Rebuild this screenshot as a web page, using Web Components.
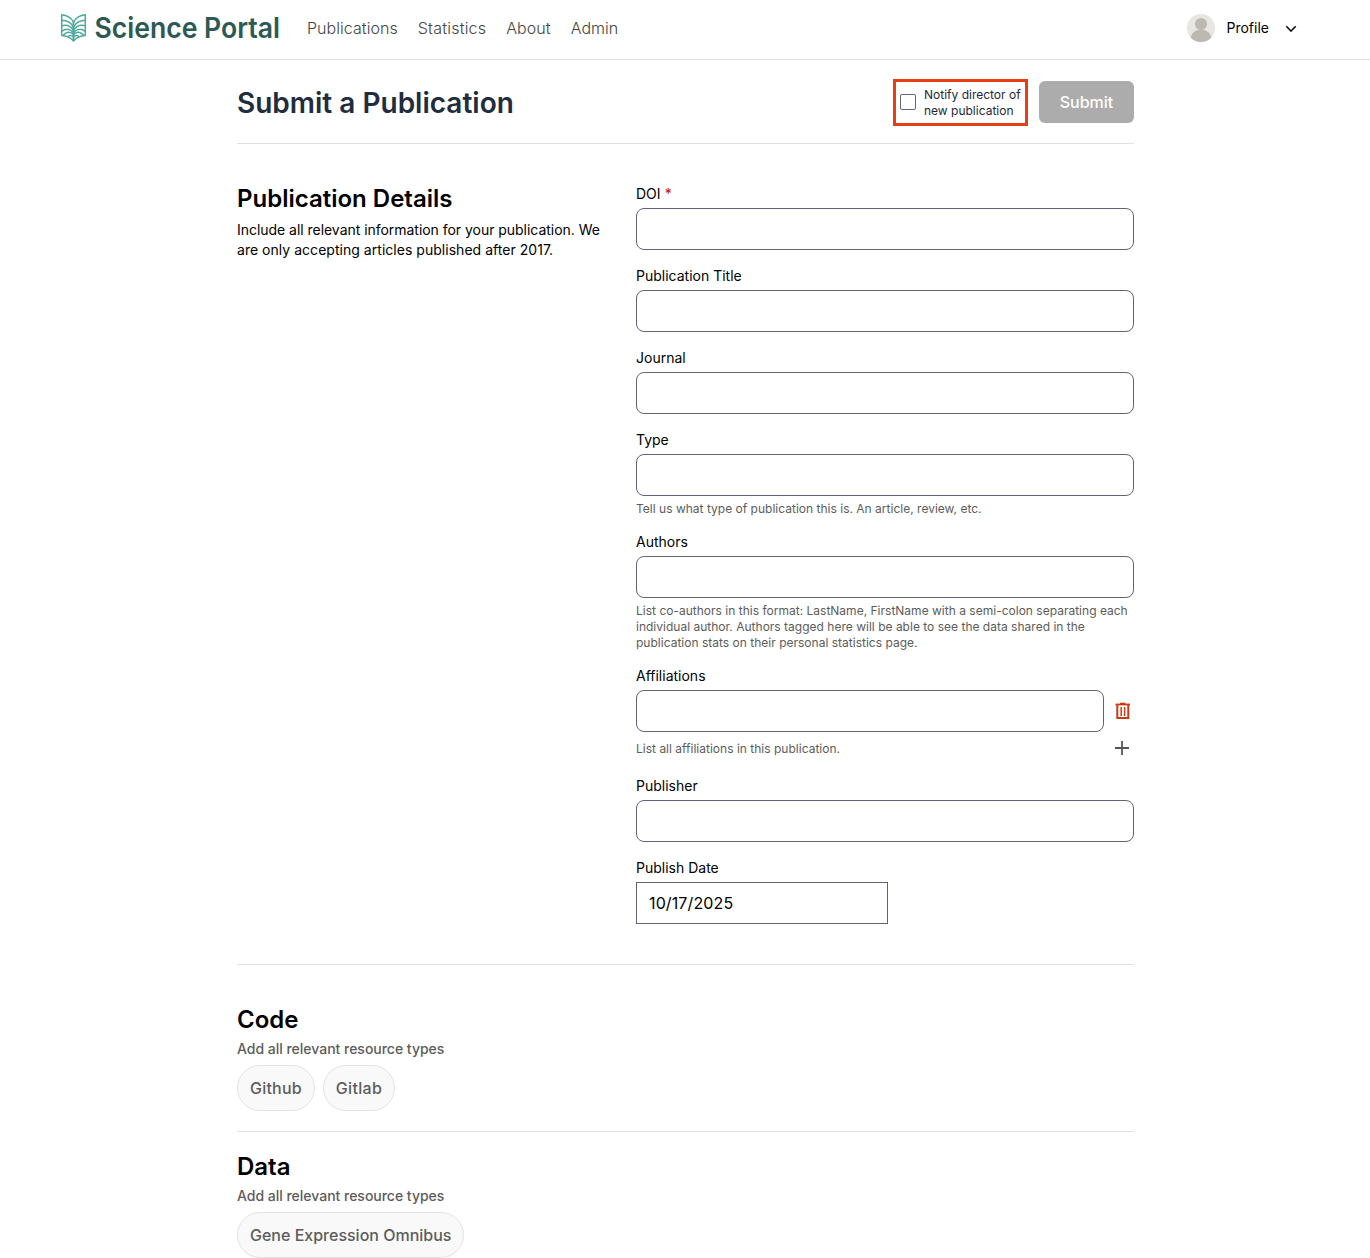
<!DOCTYPE html>
<html lang="en">
<head>
<meta charset="utf-8">
<title>Science Portal</title>
<style>
html{background:#fff}
body{margin:0;font-family:Inter,"Liberation Sans",sans-serif;color:#000;height:1258px;overflow:hidden}
</style>
</head>
<body>
<portal-app></portal-app>
<script>
const define = (name, html, setup) => {
  const tpl = document.createElement('template');
  tpl.innerHTML = '<style>*{box-sizing:border-box}:host{display:block;box-sizing:border-box}</style>' + html;
  customElements.define(name, class extends HTMLElement {
    constructor() {
      super();
      this.attachShadow({mode: 'open'}).append(tpl.content.cloneNode(true));
    }
    connectedCallback() { if (setup) setup(this, this.shadowRoot); }
  });
};

define('portal-logo', `<style>
:host{display:flex;align-items:center;width:246px;height:32px}
svg{display:block;flex:none;overflow:visible}
</style>
<svg width="230" height="36" viewBox="0 0 230 36">
  <g fill="none" stroke="#4ea99b" stroke-width="1.500" stroke-linejoin="round" transform="translate(0 2)">
    <path d="M1.700 2.800C7 3.200 11 5.800 13.500 10C16 5.800 20 3.200 25.300 2.800V23.500C20 23.800 16 26 13.500 29C11 26 7 23.800 1.700 23.500Z"/>
    <path d="M13.500 9.500V29" stroke-width="1.900"/>
    <path d="M1.700 8.300Q9.500 8.300 13.500 15Q17.500 8.300 25.300 8.300M1.700 13.800Q9.500 11.800 13.500 18.500Q17.500 11.800 25.300 13.800M1.700 19.500Q7.500 14.500 13.500 20.500Q19.500 14.500 25.300 19.500M3 23.300Q8.500 17.500 13.500 22.500Q18.500 17.500 24 23.300M7.500 25Q10.500 21.800 13.500 25Q16.500 21.800 19.500 25"/>
  </g>
  <text x="34.500" y="27.600" font-family="Inter,sans-serif" font-weight="620" font-size="28" textLength="185.500" lengthAdjust="spacingAndGlyphs" fill="#2c5954">Science Portal</text>
</svg>`);

define('nav-link', `<style>:host{font-size:16px;line-height:24px;font-weight:300;color:#444;letter-spacing:.05px;white-space:nowrap}:host([wide]){letter-spacing:.23px}</style><slot></slot>`);

define('user-menu', `<style>
:host{display:flex;align-items:center;font-size:14px;line-height:20px}
span{margin:0 14px 0 12px}
svg{display:block}
</style>
<svg width="28" height="28" viewBox="0 0 28 28"><defs><clipPath id="c"><circle cx="14" cy="14" r="14"/></clipPath></defs><g clip-path="url(#c)"><rect width="28" height="28" fill="#e9e6e1"/><circle cx="14" cy="10" r="6" fill="#bcb9b2"/><path d="M3 26C4 19 8.500 15.500 14 15.500S24 19 25 26V28H3Z" fill="#bcb9b2"/></g></svg>
<span><slot></slot></span>
<svg width="16" height="16" viewBox="0 0 16 16" fill="none" stroke="#111" stroke-width="1.600"><path d="M3.300 6.300L8 11L12.700 6.300"/></svg>`);

define('portal-header', `<style>
:host{display:flex;align-items:center;height:60px;padding:0 71px 4px 60px;border-bottom:1px solid #e0e0e0}
nav{display:flex;gap:20px;flex:1;margin-left:1px}
</style>
<portal-logo></portal-logo>
<nav><nav-link>Publications</nav-link><nav-link wide>Statistics</nav-link><nav-link>About</nav-link><nav-link>Admin</nav-link></nav>
<user-menu>Profile</user-menu>`);

define('check-option', `<style>
:host{display:flex;align-items:center;gap:8px;width:135px;height:47px;border:3px solid #e83e14;padding:0 0 0 4px;font-size:12px;line-height:16px;color:#1e293b}
i{width:16px;height:16px;border:1px solid #64657a;border-radius:2px;flex:none;margin-top:-1px}
span{white-space:nowrap;padding-top:2px}
</style><i></i><span><slot></slot></span>`);

define('submit-button', `<style>
button{display:block;border:0;margin:0;padding:0;width:95px;height:42px;border-radius:6px;background:#acacac;color:#fff;font:500 16px/24px Inter,sans-serif}
</style><button><slot></slot></button>`);

define('page-title', `<style>
:host{display:flex;align-items:center;height:84px;border-bottom:1px solid #e0e0e0}
h1{flex:1;margin:0 0 -3px;font-size:28px;line-height:36px;font-weight:640;letter-spacing:0;color:#212d3f}
check-option{margin:1px 11px 0 0}submit-button{margin-top:1px}
</style><h1><slot></slot></h1>
<check-option>Notify director of<br>new publication</check-option><submit-button>Submit</submit-button>`);

define('form-field', `<style>
label{display:block;font-size:14px;line-height:20px;margin-bottom:4px}
b{color:#c5301f;font-weight:600}
.row{display:flex;align-items:center}
.box{flex:1;height:42px;border:1px solid #62637a;border-radius:8px;padding:0 12px;font-size:16px;line-height:40px;letter-spacing:.12px}
:host([kind=date]) .box{flex:none;width:252px;border-radius:0}
.hint{font-size:12px;line-height:16px;color:#5c5c5c;margin:5px 0 -1px;letter-spacing:.01px}
:host(:not([hint])) .hint{display:none}
:host(:not([required])) b{display:none}
.tools,.del{display:none}
:host([kind=list]) .del{display:block;margin:0 3px 0 10px}
:host([kind=list]) .tools{display:block;margin-right:4px}
:host([kind=list]) .foot{display:flex;justify-content:space-between;align-items:center;height:28px;padding-top:4px}
:host([kind=list]) .hint{margin:2px 0 0}
svg{display:block}
</style>
<label><span></span> <b>*</b></label>
<div class="row"><div class="box"><slot></slot></div>
<svg class="del" width="17" height="18" viewBox="0 0 17 18" fill="none" stroke="#c93a16"><path d="M1.500 2.500H16" stroke-width="1.800"/><path d="M6 1.400H11.500" stroke-width="1.400"/><path d="M3.300 3V16H14.300V3" stroke-width="2"/><path d="M7.200 5V14M10.600 5V14" stroke-width="1.500"/></svg></div>
<div class="foot"><div class="hint"></div><svg class="tools" width="16" height="16" viewBox="0 0 16 16" stroke="#555" stroke-width="1.800"><path d="M8 1V15M1 8H15"/></svg></div>`,
(el, root) => {
  root.querySelector('span').textContent = el.getAttribute('label');
  root.querySelector('.hint').textContent = el.getAttribute('hint') || '';
});

define('details-section', `<style>
:host{display:flex;padding:40px 0;border-bottom:1px solid #e0e0e0}
.intro{width:399px;flex:none}
h2{margin:0;font-size:24px;line-height:30px;font-weight:640}
p{margin:6px 0 0;font-size:14px;line-height:20px;white-space:nowrap}
p span{letter-spacing:-.035px}p span+br+span{letter-spacing:.03px}
.fields{flex:1;display:flex;flex-direction:column;gap:16px}
</style>
<div class="intro"><h2>Publication Details</h2><p><span>Include all relevant information for your publication. We</span><br><span>are only accepting articles published after 2017.</span></p></div>
<div class="fields">
<form-field label="DOI" required></form-field>
<form-field label="Publication Title"></form-field>
<form-field label="Journal"></form-field>
<form-field label="Type" hint="Tell us what type of publication this is. An article, review, etc."></form-field>
<form-field label="Authors" hint="List co-authors in this format: LastName, FirstName with a semi-colon separating each individual author. Authors tagged here will be able to see the data shared in the publication stats on their personal statistics page."></form-field>
<form-field label="Affiliations" kind="list" hint="List all affiliations in this publication."></form-field>
<form-field label="Publisher"></form-field>
<form-field label="Publish Date" kind="date">10/17/2025</form-field>
</div>`);

define('resource-chip', `<style>
:host{height:46px;border:1px solid #e2e2e2;border-radius:23px;background:#f9f9f9;padding:0 12px;font-size:16px;line-height:44px;font-weight:500;color:#5c5c5c;white-space:nowrap}
:host([wide]){letter-spacing:.2px}
</style><slot></slot>`);

define('resource-section', `<style>
:host{padding:20px 0;border-bottom:1px solid #e0e0e0}
:host([first]){padding-top:40px}
h2{margin:0;font-size:24px;line-height:30px;font-weight:640}
p{margin:4px 0 6px;font-size:14px;line-height:20px;font-weight:500;color:#5c5c5c;letter-spacing:-.015px}
div{display:flex;gap:8px}
</style><h2></h2><p>Add all relevant resource types</p><div><slot></slot></div>`,
(el, root) => { root.querySelector('h2').textContent = el.getAttribute('heading'); });

define('portal-app', `<style>
main{width:897px;margin-left:237px}
</style>
<portal-header></portal-header>
<main>
<page-title>Submit a Publication</page-title>
<details-section></details-section>
<resource-section first heading="Code"><resource-chip wide>Github</resource-chip><resource-chip wide style="letter-spacing:.32px">Gitlab</resource-chip></resource-section>
<resource-section heading="Data"><resource-chip>Gene Expression Omnibus</resource-chip></resource-section>
</main>`);
</script>
</body>
</html>
